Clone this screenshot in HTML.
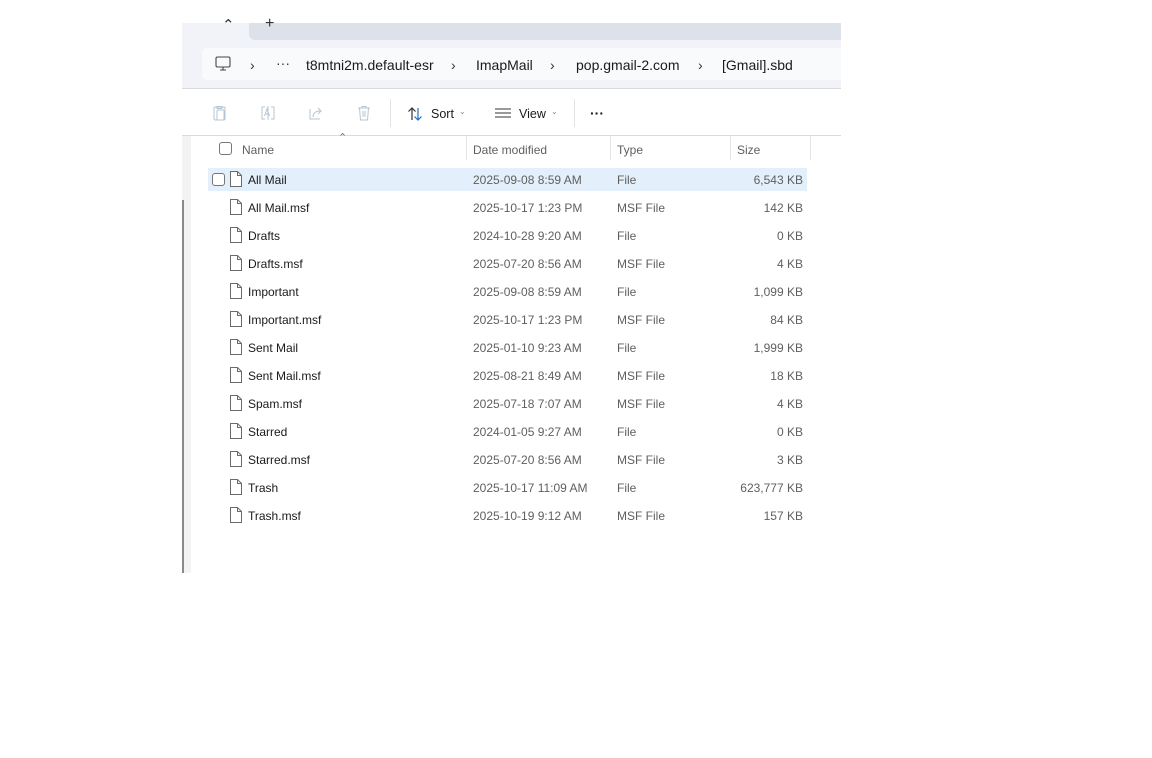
<!DOCTYPE html>
<html><head><meta charset="utf-8"><style>
*{margin:0;padding:0;box-sizing:border-box}
body{width:1152px;height:758px;background:#fff;position:relative;font-family:"Liberation Sans","Segoe UI",sans-serif;overflow:hidden}
.a{position:absolute}
.t{font-size:12px;color:#1a1a1a;white-space:nowrap}
.g{color:#5f5f5f}
.file{position:absolute;left:230px;width:12px;height:16px}
</style></head><body>
<div class="a" style="left:182px;top:23px;width:659px;height:66px;background:#f1f3f8"></div>
<div class="a" style="left:249px;top:23px;width:592px;height:17px;background:#dde2ea;border-bottom-left-radius:6px"></div>
<div class="a t" style="left:222px;top:16px;font-size:15px;color:#333">&#8963;</div>
<div class="a t" style="left:265px;top:15px;font-size:16px;color:#333">+</div>
<div class="a" style="left:202px;top:48px;width:639px;height:32px;background:#f9fafc;border-radius:5px 0 0 5px"></div>
<svg class="a" style="left:214px;top:55px" width="18" height="18" viewBox="0 0 18 18"><rect x="2" y="2" width="14" height="10" rx="1.5" fill="none" stroke="#444" stroke-width="1.1"/><path d="M6 15h6M9 12v3" stroke="#444" stroke-width="1.1"/></svg>
<div class="a t" style="left:250px;top:57px;font-size:14px;color:#333">›</div>
<div class="a t" style="left:276px;top:55px;font-size:14px;color:#333">···</div>
<div class="a t" style="left:306px;top:57px;font-size:14px">t8mtni2m.default-esr</div>
<div class="a t" style="left:451px;top:57px;font-size:14px;color:#333">›</div>
<div class="a t" style="left:476px;top:57px;font-size:14px">ImapMail</div>
<div class="a t" style="left:550px;top:57px;font-size:14px;color:#333">›</div>
<div class="a t" style="left:576px;top:57px;font-size:14px">pop.gmail-2.com</div>
<div class="a t" style="left:698px;top:57px;font-size:14px;color:#333">›</div>
<div class="a t" style="left:722px;top:57px;font-size:14px">[Gmail].sbd</div>
<div class="a" style="left:182px;top:88px;width:659px;height:1px;background:#d9dbe0"></div>
<!-- toolbar -->
<svg class="a" style="left:211px;top:104px" width="18" height="18" viewBox="0 0 18 18" fill="none" stroke="#b5c4d6" stroke-width="1"><rect x="3" y="3" width="11" height="13" rx="1.5"/><rect x="6" y="6" width="7" height="10" rx="1"/><path d="M6 2.5h5v2H6z"/></svg>
<svg class="a" style="left:259px;top:104px" width="18" height="18" viewBox="0 0 18 18" fill="none" stroke="#b5c4d6" stroke-width="1"><path d="M6 3H3v12h3M12 3h3v12h-3M9 2v14"/><path d="M5.5 12l2.5-7 2.5 7M6.5 10h3"/></svg>
<svg class="a" style="left:307px;top:104px" width="18" height="18" viewBox="0 0 18 18" fill="none" stroke="#b5c4d6" stroke-width="1"><path d="M3 5v10h10"/><path d="M6 13c0-4 3-6 7-6M11 4l3 3-3 3"/></svg>
<svg class="a" style="left:355px;top:104px" width="18" height="18" viewBox="0 0 18 18" fill="none" stroke="#b5c4d6" stroke-width="1"><path d="M3 4h12M7 4V2.5h4V4M4.5 4l1 12h7l1-12M8 7v6M10 7v6"/></svg>
<div class="a" style="left:390px;top:99px;width:1px;height:28px;background:#e3e3e3"></div>
<svg class="a" style="left:406px;top:105px" width="18" height="18" viewBox="0 0 18 18" fill="none" stroke-width="1.2"><path d="M6 15V3M2.5 6.5L6 3l3.5 3.5" stroke="#333"/><path d="M12 3v12M8.5 11.5L12 15l3.5-3.5" stroke="#1a6fc4"/></svg>
<div class="a t" style="left:431px;top:107px;font-size:12.5px">Sort</div>
<div class="a t" style="left:459px;top:107px;font-size:8px;color:#888">&#8964;</div>
<svg class="a" style="left:494px;top:106px" width="18" height="16" viewBox="0 0 18 16" stroke="#333" stroke-width="1.1"><path d="M1 3h16M1 7h16M1 11h16"/></svg>
<div class="a t" style="left:519px;top:107px;font-size:12.5px">View</div>
<div class="a t" style="left:551px;top:107px;font-size:8px;color:#888">&#8964;</div>
<div class="a" style="left:574px;top:99px;width:1px;height:28px;background:#e3e3e3"></div>
<div class="a t" style="left:590px;top:105px;font-size:14px;font-weight:bold">···</div>
<div class="a" style="left:182px;top:135px;width:659px;height:1px;background:#d9dbe0"></div>
<!-- left strip -->
<div class="a" style="left:182px;top:136px;width:9px;height:437px;background:#f3f3f3"></div>
<div class="a" style="left:182px;top:200px;width:2px;height:373px;background:#8a8a8a"></div>
<!-- header -->
<div class="a" style="left:219px;top:142px;width:13px;height:13px;border:1px solid #777;border-radius:3px"></div>
<div class="a t g" style="left:242px;top:143px">Name</div>
<div class="a t" style="left:338px;top:131px;font-size:11px;color:#777">&#8963;</div>
<div class="a t g" style="left:473px;top:143px">Date modified</div>
<div class="a t g" style="left:617px;top:143px">Type</div>
<div class="a t g" style="left:737px;top:143px">Size</div>
<div class="a" style="left:466px;top:136px;width:1px;height:24px;background:#e5e5e5"></div>
<div class="a" style="left:610px;top:136px;width:1px;height:24px;background:#e5e5e5"></div>
<div class="a" style="left:730px;top:136px;width:1px;height:24px;background:#e5e5e5"></div>
<div class="a" style="left:810px;top:136px;width:1px;height:24px;background:#e5e5e5"></div>
<div class="a" style="left:208px;top:168px;width:599px;height:23px;background:#e3effa"></div>
<div class="a" style="left:212px;top:173px;width:13px;height:13px;border:1px solid #777;border-radius:3px;background:#fff"></div>
<div id="rows"></div>
<script>
var d=[["All Mail","2025-09-08 8:59 AM","File","6,543 KB"],["All Mail.msf","2025-10-17 1:23 PM","MSF File","142 KB"],["Drafts","2024-10-28 9:20 AM","File","0 KB"],["Drafts.msf","2025-07-20 8:56 AM","MSF File","4 KB"],["Important","2025-09-08 8:59 AM","File","1,099 KB"],["Important.msf","2025-10-17 1:23 PM","MSF File","84 KB"],["Sent Mail","2025-01-10 9:23 AM","File","1,999 KB"],["Sent Mail.msf","2025-08-21 8:49 AM","MSF File","18 KB"],["Spam.msf","2025-07-18 7:07 AM","MSF File","4 KB"],["Starred","2024-01-05 9:27 AM","File","0 KB"],["Starred.msf","2025-07-20 8:56 AM","MSF File","3 KB"],["Trash","2025-10-17 11:09 AM","File","623,777 KB"],["Trash.msf","2025-10-19 9:12 AM","MSF File","157 KB"]];
var h="";d.forEach(function(r,i){var y=179+28*i;
h+='<svg class="file" style="top:'+(y-8)+'px" viewBox="0 0 12 16"><path d="M0.5 0.5h7l4 4v11h-11z" fill="#fff" stroke="#6b6b6b"/><path d="M7.5 0.5v4h4" fill="none" stroke="#6b6b6b"/></svg>';
h+='<div class="a t" style="left:248px;top:'+(y-6)+'px">'+r[0]+'</div>';
h+='<div class="a t g" style="left:473px;top:'+(y-6)+'px">'+r[1]+'</div>';
h+='<div class="a t g" style="left:617px;top:'+(y-6)+'px">'+r[2]+'</div>';
h+='<div class="a t g" style="right:349px;top:'+(y-6)+'px">'+r[3]+'</div>';});
document.getElementById("rows").innerHTML=h;
</script>
</body></html>
